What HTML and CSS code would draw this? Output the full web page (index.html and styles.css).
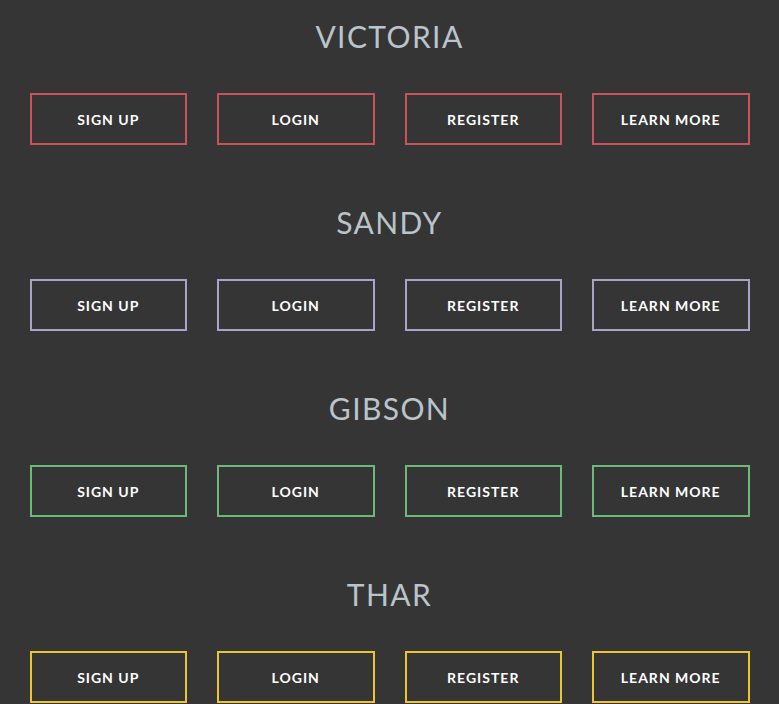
FILE: index.html
```html
<!DOCTYPE html>
<html>
<head>
<meta charset="utf-8">
<link rel="stylesheet" href="styles.css">
</head>
<body>
<section class="group victoria">
  <h1 class="title">VICTORIA</h1>
  <div class="row">
    <a class="btn">Sign up</a>
    <a class="btn">Login</a>
    <a class="btn">Register</a>
    <a class="btn">Learn more</a>
  </div>
</section>
<section class="group sandy">
  <h1 class="title">SANDY</h1>
  <div class="row">
    <a class="btn">Sign up</a>
    <a class="btn">Login</a>
    <a class="btn">Register</a>
    <a class="btn">Learn more</a>
  </div>
</section>
<section class="group gibson">
  <h1 class="title">GIBSON</h1>
  <div class="row">
    <a class="btn">Sign up</a>
    <a class="btn">Login</a>
    <a class="btn">Register</a>
    <a class="btn">Learn more</a>
  </div>
</section>
<section class="group thar">
  <h1 class="title">THAR</h1>
  <div class="row">
    <a class="btn">Sign up</a>
    <a class="btn">Login</a>
    <a class="btn">Register</a>
    <a class="btn">Learn more</a>
  </div>
</section>
</body>
</html>
```
FILE: styles.css
```css
html, body {
  margin: 0;
  padding: 0;
  background: #353535;
  overflow: hidden;
}
body {
  font-family: Lato, "Open Sans", sans-serif;
  height: 704px;
}
.group {
  width: 750px;
  margin: 0 auto;
  padding-top: 18px;
  padding-bottom: 41px;
}
.title {
  margin: 0 0 39px;
  font-size: 30px;
  line-height: 36px;
  font-weight: 400;
  letter-spacing: 1.4px;
  color: #b9c4cb;
  text-align: center;
}
.row {
  display: flex;
}
.btn {
  flex: 1;
  margin: 0 15px;
  height: 52px;
  box-sizing: border-box;
  border: 2px solid;
  display: flex;
  align-items: center;
  justify-content: center;
  color: #ffffff;
  font-size: 14px;
  font-weight: 700;
  letter-spacing: 1px;
  text-transform: uppercase;
}
.victoria .btn { border-color: #c7545b; }
.sandy .btn { border-color: #aaa3c9; }
.gibson .btn { border-color: #6db978; }
.thar .btn { border-color: #edc531; }
```
